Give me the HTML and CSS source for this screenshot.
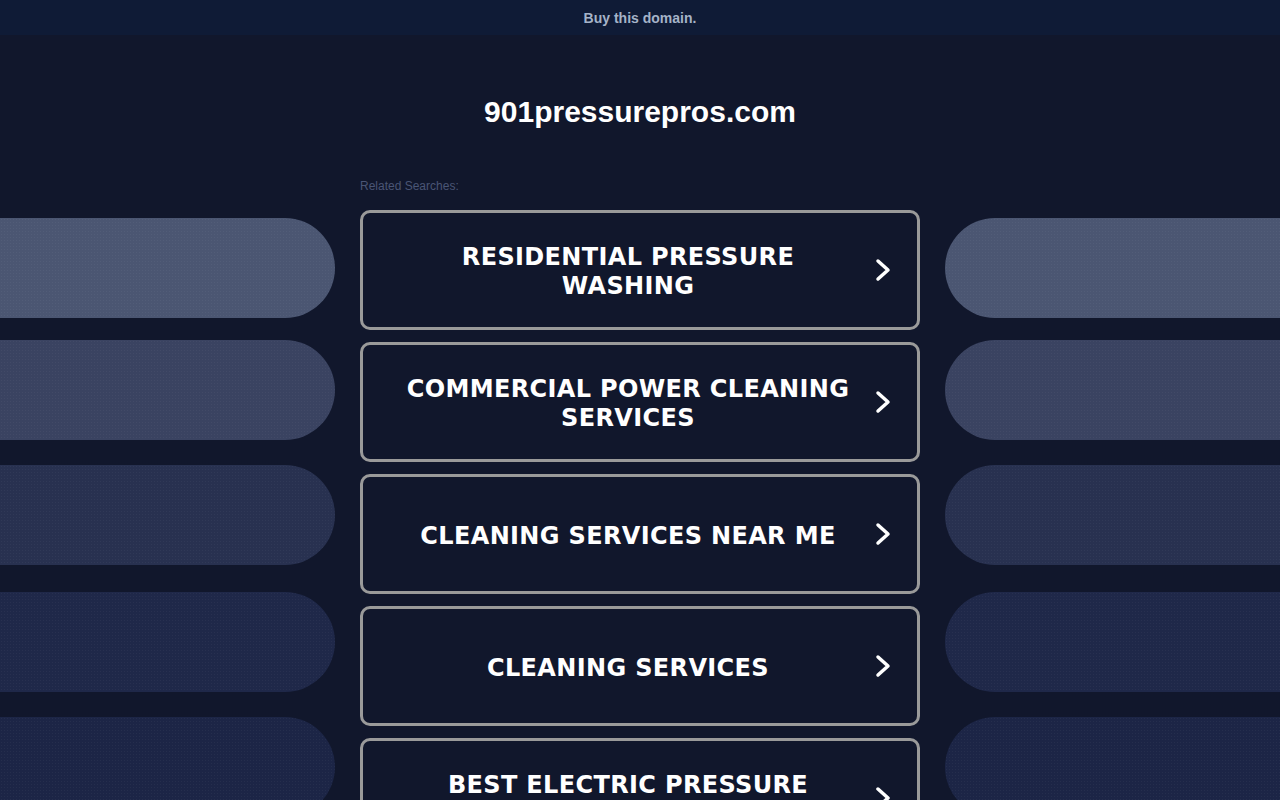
FILE: index.html
```html
<!DOCTYPE html>
<html lang="en">
<head>
<meta charset="utf-8">
<title>901pressurepros.com</title>
<link rel="stylesheet" href="styles.css">
</head>
<body>
<div class="topbar"><a class="buy" href="#">Buy this domain.</a></div>
<h1 class="domain">901pressurepros.com</h1>
<div class="row">
  <div class="side side-left">
    <div class="pill p1"></div>
    <div class="pill p2"></div>
    <div class="pill p3"></div>
    <div class="pill p4"></div>
    <div class="pill p5"></div>
  </div>
  <div class="main">
    <div class="label">Related Searches:</div>
    <div class="list">
      <a class="item" href="#"><span class="txt">RESIDENTIAL PRESSURE WASHING</span><svg class="chev" viewBox="0 0 16 24"><polyline points="3,3 13,12 3,21"/></svg></a>
      <a class="item" href="#"><span class="txt">COMMERCIAL POWER CLEANING SERVICES</span><svg class="chev" viewBox="0 0 16 24"><polyline points="3,3 13,12 3,21"/></svg></a>
      <a class="item" href="#"><span class="txt">CLEANING SERVICES NEAR ME</span><svg class="chev" viewBox="0 0 16 24"><polyline points="3,3 13,12 3,21"/></svg></a>
      <a class="item" href="#"><span class="txt">CLEANING SERVICES</span><svg class="chev" viewBox="0 0 16 24"><polyline points="3,3 13,12 3,21"/></svg></a>
      <a class="item" href="#"><span class="txt">BEST ELECTRIC PRESSURE WASHER</span><svg class="chev" viewBox="0 0 16 24"><polyline points="3,3 13,12 3,21"/></svg></a>
    </div>
  </div>
  <div class="side side-right">
    <div class="pill p1"></div>
    <div class="pill p2"></div>
    <div class="pill p3"></div>
    <div class="pill p4"></div>
    <div class="pill p5"></div>
  </div>
</div>
</body>
</html>
```
FILE: styles.css
```css
html, body {
  margin: 0;
  padding: 0;
  height: 100%;
  overflow: hidden;
  background: #11172c;
}
body {
  font-family: "Liberation Sans", Arial, sans-serif;
}
.topbar {
  height: 35px;
  background: #0f1b36;
  display: flex;
  align-items: center;
  justify-content: center;
}
.buy {
  color: #a5b3c8;
  font-size: 14px;
  font-weight: bold;
  text-decoration: none;
  line-height: 16px;
}
.domain {
  margin: 58px 0 46px;
  text-align: center;
  color: #ffffff;
  font-size: 30px;
  line-height: 38px;
  font-weight: bold;
}
.row {
  display: grid;
  grid-template-columns: 335px 560px 335px;
  column-gap: 25px;
}
.side {
  display: flex;
  flex-direction: column;
  gap: 25px;
  padding-top: 41px;
}
.pill {
  height: 100px;
  background-image: radial-gradient(rgba(255,255,255,0.04) 0.6px, transparent 0.9px);
  background-size: 3px 3px;
}
.side-left .pill { border-radius: 0 50px 50px 0; }
.side-right .pill { border-radius: 50px 0 0 50px; }
.p1 { background-color: #4b5672; }
.p2 { background-color: #3a4361; margin-top: -3px; }
.p3 { background-color: #283150; }
.p4 { background-color: #1f2849; margin-top: 2px; }
.p5 { background-color: #1c2546; }
.label {
  color: #4a5575;
  font-size: 12px;
  line-height: 14px;
  margin: 2px 0 17px;
}
.list {
  display: flex;
  flex-direction: column;
  gap: 12px;
}
.item {
  box-sizing: border-box;
  height: 120px;
  border: 3px solid #9a9a9a;
  border-radius: 10px;
  display: flex;
  align-items: center;
  padding: 0 26px 0 18px;
  text-decoration: none;
}
.txt {
  flex: 1;
  text-align: center;
  color: #ffffff;
  font-family: "DejaVu Sans", Verdana, sans-serif;
  font-weight: bold;
  font-size: 24px;
  letter-spacing: 0.35px;
  line-height: 29px;
  padding: 4px 16px 0;
}
.chev {
  width: 16px;
  height: 24px;
  flex: none;
}
.chev polyline {
  fill: none;
  stroke: #ffffff;
  stroke-width: 3.5;
  stroke-linecap: round;
  stroke-linejoin: round;
}
```
